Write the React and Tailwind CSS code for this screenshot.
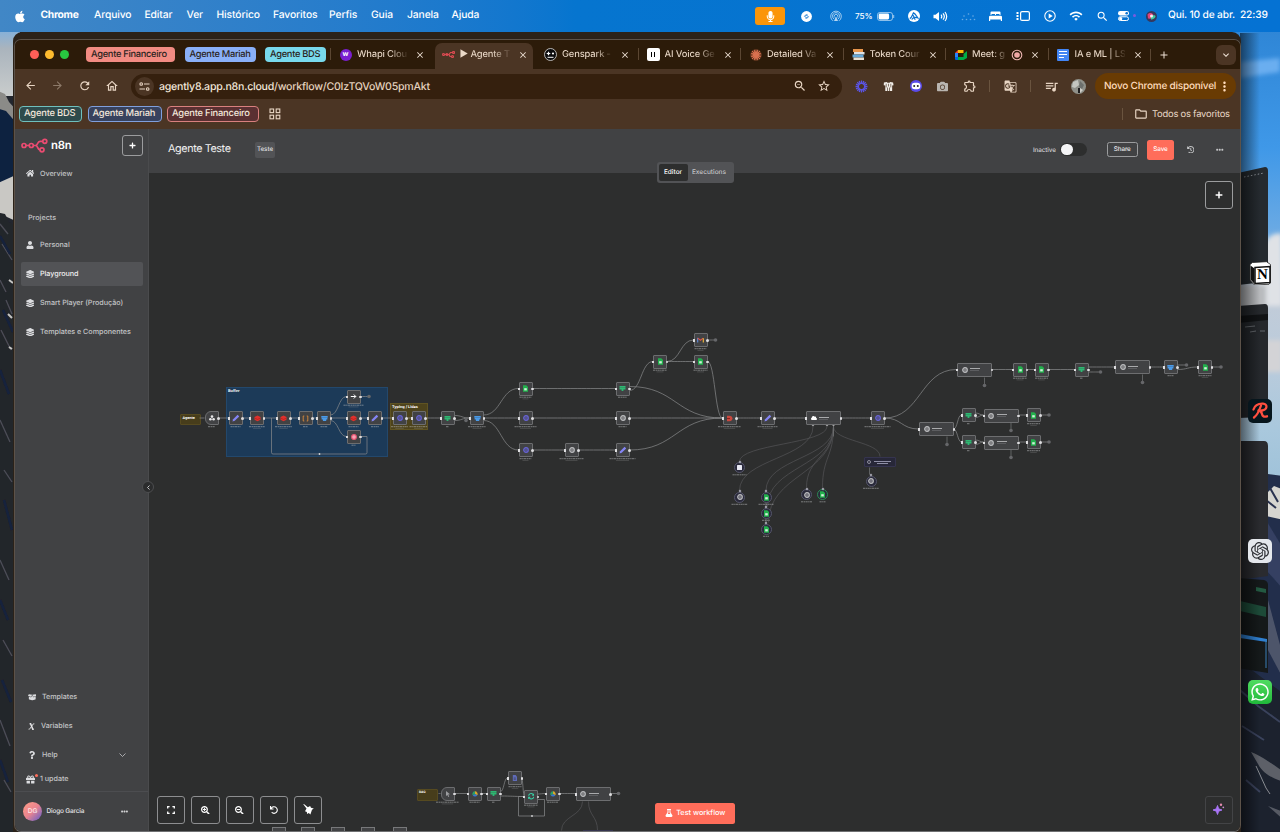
import React from "react";
import {
  FaApple, FaHome, FaUser, FaLayerGroup, FaBoxOpen, FaQuestion, FaGift, FaPlus, FaFlask,
  FaMicrophone, FaWhatsapp, FaCloud, FaEllipsisH, FaSearchPlus, FaSearchMinus, FaUndo, FaHistory, FaCamera, FaSyncAlt,
} from "react-icons/fa";
import {
  MdArrowBack, MdArrowForward, MdRefresh, MdOutlineHome, MdStarBorder, MdZoomOut, MdOutlineExtension,
  MdGTranslate, MdQueueMusic, MdOutlineFolder, MdClose, MdAdd, MdMoreVert, MdExpandMore, MdWifi, MdSearch,
} from "react-icons/md";
import { SiOpenai } from "react-icons/si";

/* ---------- desktop ---------- */

function Wallpaper() {
  return (
    <svg className="absolute inset-0 h-full w-full" viewBox="0 0 1280 832" aria-hidden="true">
      <defs>
        <linearGradient id="sky" x1="0" y1="0" x2="0" y2="1">
          <stop offset="0" stopColor="#2f86d6" />
          <stop offset="0.25" stopColor="#3f98e8" />
          <stop offset="0.42" stopColor="#68a9e4" />
          <stop offset="0.55" stopColor="#c3ccd8" />
          <stop offset="0.72" stopColor="#b9cbdc" />
          <stop offset="0.85" stopColor="#a9c8dd" />
          <stop offset="1" stopColor="#9cc0d8" />
        </linearGradient>
        <linearGradient id="leftsky" x1="0" y1="0" x2="0" y2="1">
          <stop offset="0" stopColor="#7fb0de" />
          <stop offset="0.3" stopColor="#aab4bd" />
          <stop offset="1" stopColor="#c9cccc" />
        </linearGradient>
        <linearGradient id="shade" x1="0" y1="0" x2="1" y2="0">
          <stop offset="0" stopColor="#000" stopOpacity="0.55" />
          <stop offset="1" stopColor="#000" stopOpacity="0" />
        </linearGradient>
        <filter id="soft"><feGaussianBlur stdDeviation="2" /></filter>
        <filter id="rough"><feGaussianBlur stdDeviation="0.7" /></filter>
      </defs>
      <rect width="1280" height="832" fill="#22262e" />
      <g filter="url(#rough)">
        <rect x="-4" y="28" width="24" height="68" fill="url(#leftsky)" />
        <path d="M-4 90l9 4 4 8 9 10v20H-4z" fill="#8b8b88" />
        <path d="M-4 108l10 3 12 14v64l-22-6z" fill="#0f2240" />
        <path d="M-4 184l22 -10v48l-22-10z" fill="#c9c8c4" />
        <path d="M-4 212l9 2 4 8 9 4v606H-4z" fill="#24252b" />
        <g stroke="#4c4e57" strokeWidth="1.300">
          <path d="M0 224l8 10M2 244l10 16M0 280l6 12M6 300l6 14M1 330l10 20M0 420l10 22M4 470l8 12M0 560l9 20M3 640l9 16M0 720l10 26M4 780l7 12" />
        </g>
        <g stroke="#12203c" strokeWidth="2.500">
          <path d="M0 236l10 18M3 310l10 22M0 370l9 24M4 500l8 30M0 600l8 20M2 680l9 22M0 760l8 22" />
        </g>
        <path d="M9 280l4 3M8 314l4 4M9 347l3 2" stroke="#c5c5c2" strokeWidth="2" />
      </g>

      <rect x="1220" y="30" width="60" height="470" fill="url(#sky)" />
      <g filter="url(#soft)">
        <path d="M1240 62l40 -4v14l-40 6z" fill="#6aaef0" />
        <path d="M1262 248c6-12 12-16 20-14v72h-22z" fill="#dfe2e6" />
        <path d="M1240 285h26v26h-26z" fill="#b8babd" />
        <path d="M1262 340h20v32h-20z" fill="#d3d3d6" />
      </g>
      <g filter="url(#rough)">
        <path d="M1238 480l30-6 16 2v360h-46z" fill="#232f4b" />
        <path d="M1266 494l8-8 10 4v30l-18-4z" fill="#d6d5d0" />
        <path d="M1266 500l10 8M1270 488l8 14" stroke="#2a3350" strokeWidth="2" />
        <path d="M1266 520l18 30v40l-18-20z" fill="#343f62" />
        <path d="M1268 600l16 60v20l-16-30z" fill="#6a6f80" opacity="0.6" />
        <path d="M1238 660l46 34v142h-46z" fill="#1b222e" />
        <path d="M1240 690l18 16 22 16M1242 726l22 14M1246 780l14 12" stroke="#3a435c" strokeWidth="2" fill="none" />
        <path d="M1251 752c6 2 16 8 33 20v10c-14-4-22-10-26-18z" fill="#5d6068" />
        <path d="M1256 766l10 22 4 6" stroke="#8a8c92" fill="none" />
        <path d="M1268 806l16 6v8z" fill="#565a64" />
      </g>

      {/* stage manager thumbnails */}
      <path d="M1238 173l27-6q3 0 3 4v106q0 5-3 5l-27 3z" fill="#252a2f" />
      <path d="M1244 177l20-4" stroke="#8b9096" strokeWidth="1" strokeDasharray="1.5 2" />
      <path d="M1238 306l27-2q3 0 3 4v104q0 5-3 5l-27 1z" fill="#25282c" />
      <path d="M1238 316l30-2v6l-30 3z" fill="#111315" />
      <path d="M1245 327l10-1M1250 332l6-1M1260 331l5 0" stroke="#63676c" />
      <path d="M1238 441h26q4 0 4 5v130l-30 4z" fill="#2a2b2f" />
      <path d="M1238 578l26 2q4 1 4 5v88l-30-5z" fill="#15191a" />
      <path d="M1240 601l26 6v10l-26-6z" fill="#1d4a38" />
      <path d="M1256 587l10 2v4l-10-2z" fill="#235a42" />
      <path d="M1240 634l27 5v3l-27-4z" fill="#2f7fd0" />
      <path d="M1266 640v28" stroke="#3b7fb8" />
      <rect x="1240" y="33" width="20" height="799" fill="url(#shade)" />
    </svg>
  );
}

function MenuSlot({ w, children }) {
  return <div className={"flex h-full items-center justify-center " + w}>{children}</div>;
}

function MenuBar() {
  const items = [
    ["Chrome", "w-[53.5px] font-bold tracking-[-0.3px]"],
    ["Arquivo", "w-[50.5px]"],
    ["Editar", "w-[42px]"],
    ["Ver", "w-[30px]"],
    ["Histórico", "w-[56.5px]"],
    ["Favoritos", "w-[56px]"],
    ["Perfis", "w-[42px]"],
    ["Guia", "w-[36px]"],
    ["Janela", "w-[44.5px]"],
    ["Ajuda", "w-[40px]"],
  ];
  return (
    <header className="relative flex h-8 items-center bg-linear-to-r from-[#4187c6] via-[#0675cf] via-45% to-[#0572d3] text-[10.3px] font-medium tracking-[-0.1px] text-white">
      <FaApple className="ml-[14px] h-[13px] w-[12px]" />
      <nav className="ml-[14.500px] flex">
        {items.map(([t, c]) => (
          <span key={t} className={"whitespace-nowrap " + c}>{t}</span>
        ))}
      </nav>
      <div className="ml-auto flex h-full items-center pr-[11px]">
        <div className="flex h-[18px] w-[30px] items-center justify-center rounded-[3px] bg-[#fb9509]">
          <FaMicrophone className="h-[11px] w-[11px]" />
        </div>
        <div className="w-[6px]" />
        <MenuSlot w="w-[30px]">
          <svg className="size-[11px]" viewBox="0 0 12 12"><circle cx="6" cy="6" r="5.900" fill="#fff" /><path d="M7 3.800L4.500 4.800a1 1 0 000 1.700l1.700.7M5 8.200l2.500-1a1 1 0 000-1.700l-1.700-.7" stroke="#0a72d0" strokeWidth=".9" fill="none" /></svg>
        </MenuSlot>
        <MenuSlot w="w-[30px]">
          <svg className="size-[12px] opacity-70" viewBox="0 0 12 12" fill="none" stroke="#fff" strokeWidth="0.9"><path d="M3 10.800a5.300 5.300 0 116 0M4 9a3.500 3.500 0 114 0M5 7.600a1.800 1.800 0 112 0" /><path d="M6 6.500l2 4.500H4z" fill="#fff" stroke="none" /></svg>
        </MenuSlot>
        <span className="ml-[4px] w-[22px] text-[8.200px] whitespace-nowrap">75%</span>
        <svg className="h-[9px] w-[18px]" viewBox="0 0 18 9"><rect x=".5" y=".5" width="15" height="8" rx="2.300" fill="none" stroke="#fff" opacity=".55" /><rect x="1.600" y="1.600" width="10.500" height="5.800" rx="1.300" fill="#fff" /><path d="M16.700 3v3" stroke="#fff" opacity=".6" /></svg>
        <div className="w-[6px]" />
        <MenuSlot w="w-[26px]">
          <svg className="size-[12px]" viewBox="0 0 12 12"><circle cx="6" cy="6" r="6" fill="#fff" /><path d="M1.800 8.600C4 7.500 4.300 5 5.500 2.800c1.800.5 3 3.500 4.300 5C8 7.300 5 7.500 3.700 9.500M5.200 5.200l2 4.500" stroke="#0a72d0" strokeWidth="1.200" fill="none" /></svg>
        </MenuSlot>
        <MenuSlot w="w-[26px]">
          <svg className="h-[11px] w-[15px]" viewBox="0 0 15 11" fill="none" stroke="#fff" strokeWidth="1.200"><path d="M.5 3.700h2L6 1v9L2.500 7.300h-2z" fill="#fff" stroke="none" /><path d="M8 3.600a3 3 0 010 3.800M10 2.300a5 5 0 010 6.400M12 1a7.500 7.500 0 010 9" /></svg>
        </MenuSlot>
        <MenuSlot w="w-[30px]">
          <svg className="h-[9px] w-[15px] opacity-40" viewBox="0 0 15 9" fill="#fff"><circle cx="3" cy="4" r=".8" /><circle cx="7.500" cy="2" r=".8" /><circle cx="12" cy="4" r=".8" /><circle cx="1.500" cy="7.500" r=".8" /><circle cx="5.500" cy="7.500" r=".8" /><circle cx="9.500" cy="7.500" r=".8" /><circle cx="13.500" cy="7.500" r=".8" /></svg>
        </MenuSlot>
        <MenuSlot w="w-[24px]">
          <svg className="h-[10px] w-[13px]" viewBox="0 0 13 10" fill="#fff"><path d="M1.500 1.500a1 1 0 011-1h8a1 1 0 011 1V4h-1V3H7v1H6V3H2.500v1h-1zM0 6a1.300 1.300 0 011.300-1.300h10.400A1.300 1.300 0 0113 6v4h-1.200V8.500H1.200V10H0z" /></svg>
        </MenuSlot>
        <MenuSlot w="w-[32px]">
          <svg className="h-[10px] w-[14px]" viewBox="0 0 14 10"><rect x="4.600" y=".6" width="8.800" height="8.800" rx="1.500" fill="none" stroke="#fff" strokeWidth="1.200" /><path d="M.5 1h2v2h-2zM.5 4h2v2h-2zM.5 7h2v2h-2z" fill="#fff" /></svg>
        </MenuSlot>
        <MenuSlot w="w-[21px]">
          <svg className="size-[12px]" viewBox="0 0 12 12"><circle cx="6" cy="6" r="5.200" fill="none" stroke="#fff" strokeWidth="1.100" /><path d="M4.700 3.600v4.800L8.700 6z" fill="#fff" /></svg>
        </MenuSlot>
        <MenuSlot w="w-[32px]"><MdWifi className="size-[14px]" /></MenuSlot>
        <MenuSlot w="w-[20px]"><MdSearch className="size-[13px]" /></MenuSlot>
        <MenuSlot w="w-[23px]">
          <svg className="h-[10px] w-[11px]" viewBox="0 0 11 10"><rect x="0" y="0" width="11" height="4.400" rx="2.200" fill="#fff" /><circle cx="8.700" cy="2.200" r="1.300" fill="#0a72d0" /><rect x=".5" y="5.800" width="10" height="3.700" rx="1.800" fill="none" stroke="#fff" /><circle cx="2.700" cy="7.650" r="1.600" fill="#fff" /></svg>
        </MenuSlot>
        <MenuSlot w="w-[32px]">
          <svg className="size-[11px]" viewBox="0 0 11 11"><circle cx="5.500" cy="5.500" r="5.500" fill="#35385e" /><path d="M1.500 3.500C4 1 7 2 7.500 4.500S5 8 2 7.500z" fill="#e0457a" /><path d="M5 6c2-2.500 4.500-2 4.500-.5S7 8.500 5 8.500z" fill="#3fc9a0" /><circle cx="5.500" cy="5" r="1.500" fill="#fff" opacity=".85" /></svg>
        </MenuSlot>
        <span className="ml-px w-[101px] whitespace-pre text-[10.200px] tracking-[-0.15px]">Qui. 10 de abr.  22:39</span>
      </div>
      <span className="absolute left-[1133px] top-[14px] size-[3px] rounded-full bg-[#7a5be0]" />
    </header>
  );
}

function DockIcon({ cls, children }) {
  return <div className={"absolute left-[1248px] flex size-[24px] items-center justify-center " + cls}>{children}</div>;
}

/* ---------- browser ---------- */

function N8nMark({ className }) {
  return (
    <svg className={className} viewBox="0 0 27 15" fill="none" stroke="#ea4b71" strokeWidth="1.700">
      <circle cx="3" cy="7.500" r="2" /><circle cx="10.300" cy="7.500" r="2" /><circle cx="23.800" cy="3.300" r="2" /><circle cx="21" cy="11.800" r="2" />
      <path d="M5 7.500h3.300M12.300 7.500h2.200c2.700 0 1.500-4.200 4.500-4.200h2.800M14.500 7.500c3 0 1.500 4.300 4.500 4.300" />
    </svg>
  );
}

const tabIcons = {
  whapi: <div className="flex size-[12px] items-center justify-center rounded-full bg-[#7a1fd0] text-[7px] font-bold text-white">w</div>,
  n8n: (
    <svg className="h-[7px] w-[13px]" viewBox="0 0 13 7" fill="none" stroke="#d94a50" strokeWidth="1.200"><circle cx="1.600" cy="3.500" r="1" /><circle cx="5" cy="3.500" r="1" /><circle cx="11.500" cy="1.500" r="1" /><circle cx="10.500" cy="5.500" r="1" /><path d="M2 3.500h5l1.500-2h2M7 3.500l1 2h1.500" /></svg>
  ),
  genspark: (
    <svg className="size-[13px]" viewBox="0 0 13 13"><circle cx="6.500" cy="6.500" r="6" fill="#0c0c0e" stroke="#dcdcdc" strokeWidth=".8" /><path d="M4.500 3.200l.7 1.600 1.600.7-1.600.7-.7 1.600-.7-1.600-1.600-.7 1.600-.7z" fill="#fff" /><circle cx="9" cy="5.500" r="1.100" fill="#fff" /><path d="M3.500 9.300h6" stroke="#fff" /></svg>
  ),
  eleven: <div className="flex size-[13px] items-center justify-center gap-[1.500px] rounded-[2px] bg-white"><i className="h-[5.500px] w-[1.500px] bg-black" /><i className="h-[5.500px] w-[1.500px] bg-black" /></div>,
  claude: (
    <svg className="size-[12px]" viewBox="0 0 12 12" stroke="#d9704f" strokeWidth="1.100"><path d="M6 .5v11M.5 6h11M2 2l8 8M10 2l-8 8M4 .8l4 10.400M8 .8L4 11.200M.8 4l10.400 4M.8 8l10.400-4" /></svg>
  ),
  token: (
    <svg className="size-[13px]" viewBox="0 0 13 13"><rect x="1" y="1" width="10" height="3" fill="#e9964c" /><rect x="2" y="4" width="10.500" height="2.500" fill="#dfe3e6" /><rect x=".5" y="6.500" width="11" height="3" fill="#65a8d8" /><rect x="1.500" y="9.500" width="10.500" height="2.500" fill="#e8e0d2" /></svg>
  ),
  meet: (
    <svg className="h-[10px] w-[12px]" viewBox="0 0 12 10"><path d="M0 3l3-3v3z" fill="#ea4335" /><path d="M3 0h5.500v3H3z" fill="#fbbc04" /><path d="M0 3h3v4H0z" fill="#2684fc" /><path d="M0 7h3v3H1a1 1 0 01-1-1z" fill="#0066da" /><path d="M3 7h5.500v3H3zM8.500 0v10L12 8V1L8.500 4z" fill="#00ac47" /></svg>
  ),
  docs: <div className="flex size-[12px] flex-col justify-center gap-[1.500px] rounded-[1px] bg-[#4285f4] px-[2px]"><i className="h-[1.200px] bg-white" /><i className="h-[1.200px] bg-white" /><i className="h-[1.200px] w-[5px] bg-white" /></div>,
};

function Tab({ icon, title, active, rec, line }) {
  return (
    <div className="relative h-full w-[102.500px] shrink-0 px-[2.500px] pt-[3px]">
      {line && <span className="absolute left-0 top-[8px] h-[12px] w-px bg-[#5b4632]" />}
      <div className={"flex h-[26px] items-center rounded-t-[7px] pb-[3px] pl-[6px] " + (active ? "bg-[#4b3524]" : "")}>
        <div className="flex w-[14px] shrink-0 justify-center">{icon}</div>
        <span className={"ml-[4.500px] mt-px whitespace-nowrap bg-linear-to-r from-[#ead9c8] from-65% to-[#ead9c8]/10 bg-clip-text text-[9.400px] font-medium tracking-[-0.15px] text-transparent " + (rec ? "w-[34px]" : "w-[50px]")}>{title}</span>
        {rec && (
          <svg className="ml-[5px] size-[12px]" viewBox="0 0 12 12"><circle cx="6" cy="6" r="4.800" fill="none" stroke="#f2b8b5" strokeWidth="1.100" /><circle cx="6" cy="6" r="2.800" fill="#f0a8a5" /></svg>
        )}
        <MdClose className={"size-[10px] shrink-0 text-[#efe2d6] " + (rec ? "ml-[7px]" : "ml-[8px]")} />
      </div>
    </div>
  );
}

function TabStrip() {
  return (
    <div className="flex h-[29px] items-center bg-[#2c1b09]">
      <div className="ml-[15px] flex gap-[6px]">
        <i className="size-[9px] rounded-full bg-[#ff5f57]" />
        <i className="size-[9px] rounded-full bg-[#febb2e]" />
        <i className="size-[9px] rounded-full bg-[#28c840]" />
      </div>
      <div className="ml-[17px] flex gap-[9.500px] text-[9.300px] font-medium tracking-[-0.3px] text-[#2a2320]">
        <span className="flex h-[15.500px] w-[89px] items-center whitespace-nowrap rounded-[4px] bg-[#f28b82] pl-[5px] pt-px">Agente Financeiro</span>
        <span className="flex h-[15.500px] w-[71px] items-center whitespace-nowrap rounded-[4px] bg-[#8ab0f8] pl-[5px] pt-px">Agente Mariah</span>
        <span className="flex h-[15.500px] w-[60.500px] items-center whitespace-nowrap rounded-[4px] bg-[#78d9ec] pl-[5px] pt-px">Agente BDS</span>
      </div>
      <div className="ml-[4.500px] flex h-full">
        <Tab line icon={tabIcons.whapi} title="Whapi Clou" />
        <Tab active icon={tabIcons.n8n} title="► Agente T" />
        <Tab icon={tabIcons.genspark} title="Genspark -" />
        <Tab line icon={tabIcons.eleven} title="AI Voice Ge" />
        <Tab line icon={tabIcons.claude} title="Detailed Va" />
        <Tab line icon={tabIcons.token} title="Token Cour" />
        <Tab line rec icon={tabIcons.meet} title="Meet: g" />
        <Tab line icon={tabIcons.docs} title="IA e ML | LS" />
      </div>
      <span className="h-[12px] w-px bg-[#5b4632]" />
      <MdAdd className="ml-[7px] size-[12px] text-[#efe2d6]" />
      <div className="ml-auto mr-[4px] flex size-[20px] items-center justify-center rounded-[6px] bg-[#4b3524]">
        <MdExpandMore className="size-[12px] text-[#efe2d6]" />
      </div>
    </div>
  );
}

function ToolSlot({ w, children }) {
  return <div className={"flex shrink-0 justify-center " + w}>{children}</div>;
}

function Toolbar() {
  return (
    <div className="flex h-[34px] items-center bg-[#4b3524] text-[#e8d5c3]">
      <div className="ml-[1.500px] flex">
        <ToolSlot w="w-[28px]"><MdArrowBack className="size-[13px]" /></ToolSlot>
        <ToolSlot w="w-[26px]"><MdArrowForward className="size-[13px] text-[#8d7a69]" /></ToolSlot>
        <ToolSlot w="w-[28px]"><MdRefresh className="size-[13.500px]" /></ToolSlot>
        <ToolSlot w="w-[26px]"><MdOutlineHome className="size-[14px]" /></ToolSlot>
      </div>
      <div className="ml-[6.500px] flex h-[25px] w-[711px] items-center rounded-full bg-[#35200e]">
        <div className="ml-[4px] flex size-[19px] items-center justify-center rounded-full bg-[#4b3524]">
          <svg className="h-[9px] w-[11px]" viewBox="0 0 11 9" fill="none" stroke="#e8d5c3" strokeWidth="1.100"><circle cx="2.200" cy="2" r="1.300" /><path d="M5 2h5.500M.5 7H6" /><circle cx="8.700" cy="7" r="1.300" /></svg>
        </div>
        <span className="ml-[5px] mt-px text-[10.600px] font-medium tracking-[-0.24px] text-[#f2e6da]">agently8.app.n8n.cloud<span className="text-[#e3d0bd]">/workflow/C0IzTQVoW05pmAkt</span></span>
        <MdZoomOut className="ml-auto size-[14px]" />
        <MdStarBorder className="ml-[10px] mr-[11px] size-[14px]" />
      </div>
      <div className="ml-[6px] flex items-center">
        <ToolSlot w="w-[27px]">
          <svg className="size-[13px]" viewBox="-6.500 -6.500 13 13" stroke="#5b54e6" strokeWidth="1.300" fill="none"><path d="M0-6v3.500M0 6V2.500M-6 0h3.500M6 0H2.500M-4.200-4.200l2.500 2.500M4.200 4.200L1.700 1.700M4.200-4.200L1.700-1.700M-4.200 4.200l2.500-2.500M-2.300-5.500L-1-2.300M2.300-5.500L1-2.300M-2.300 5.500L-1 2.300M2.300 5.500L1 2.300M-5.500-2.300L-2.300-1M5.500-2.300L2.300-1M-5.500 2.300L-2.300 1M5.500 2.300L2.300 1" /></svg>
        </ToolSlot>
        <ToolSlot w="w-[27px]">
          <svg className="size-[11px]" viewBox="0 0 12 12" fill="#f1ede8"><path d="M1 1.500l3-.5 1 1h2l1-1 3 .5.500 3-1.500.5V11H7.500V7h-.7v4H5.200V7h-.7v4H2.500V5L.8 4.500z" /><path d="M3.500 3v4M8.500 3v4M6 3v3" stroke="#4b3524" strokeWidth=".7" /></svg>
        </ToolSlot>
        <ToolSlot w="w-[27px]">
          <svg className="size-[12px]" viewBox="0 0 12 12"><circle cx="6" cy="6" r="6" fill="#5a4be8" /><rect x="1.600" y="2.800" width="8.800" height="6.400" rx="3.200" fill="#fff" /><circle cx="4.200" cy="6" r="1" fill="#222" /><circle cx="7.800" cy="6" r="1" fill="#222" /></svg>
        </ToolSlot>
        <ToolSlot w="w-[27px]"><FaCamera className="size-[11px] text-[#b9b5b0]" /></ToolSlot>
        <ToolSlot w="w-[27px]"><MdOutlineExtension className="size-[14px]" /></ToolSlot>
      </div>
      <span className="ml-[6px] h-[12px] w-px bg-[#6a543f]" />
      <ToolSlot w="w-[40px]"><MdGTranslate className="size-[13px]" /></ToolSlot>
      <span className="h-[12px] w-px bg-[#6a543f]" />
      <ToolSlot w="w-[40px]"><MdQueueMusic className="size-[15px]" /></ToolSlot>
      <svg className="size-[15px]" viewBox="0 0 15 15"><circle cx="7.500" cy="7.500" r="7.500" fill="#8f9089" /><path d="M2 3l5-2 1 5-4 3-3-1z" fill="#c4c6c0" /><path d="M9 2l4 4-2 4-3-2z" fill="#6c6f6c" /><path d="M7 9h2v5H7z" fill="#1f1f20" /><path d="M9 9l3 2-3 3z" fill="#d0cfc9" /></svg>
      <div className="ml-auto mr-[4px] flex h-[26px] w-[141px] items-center rounded-full bg-[#693b03] text-[10px] font-medium tracking-[-0.22px] text-[#ffdcbc]">
        <span className="ml-[9px] mt-px whitespace-nowrap">Novo Chrome disponível</span>
        <MdMoreVert className="ml-auto mr-[4px] size-[15px] shrink-0" />
      </div>
    </div>
  );
}

function Bookmarks() {
  return (
    <div className="flex h-[26px] items-start bg-[#4b3524] pt-[3px] text-[9.400px] font-medium tracking-[-0.22px] text-[#f2e6da]">
      <span className="ml-[4px] flex h-[15.500px] w-[63px] items-center whitespace-nowrap rounded-[4px] border border-[#6fc0bd] bg-[#2f4b4c] pl-[4px] pt-px">Agente BDS</span>
      <span className="ml-[5.500px] flex h-[15.500px] w-[74px] items-center whitespace-nowrap rounded-[4px] border border-[#7f9fdd] bg-[#38425e] pl-[4px] pt-px">Agente Mariah</span>
      <span className="ml-[5.500px] flex h-[15.500px] w-[92px] items-center whitespace-nowrap rounded-[4px] border border-[#d9807e] bg-[#5a3032] pl-[4px] pt-px">Agente Financeiro</span>
      <svg className="ml-[10px] mt-[2px] size-[12px]" viewBox="0 0 12 12" fill="none" stroke="#e8d5c3" strokeWidth="1.100"><rect x="1" y="1" width="3.600" height="3.600" /><rect x="7.200" y="1" width="3.600" height="3.600" /><rect x="1" y="7.200" width="3.600" height="3.600" /><rect x="7.200" y="7.200" width="3.600" height="3.600" /></svg>
      <span className="ml-auto mt-[2px] h-[12px] w-px bg-[#6a543f]" />
      <MdOutlineFolder className="ml-[11px] mt-px size-[14px] text-[#e8d5c3]" />
      <span className="ml-[4px] mt-[1.500px] w-[88px] whitespace-nowrap text-[9.400px] font-normal tracking-[-0.22px] text-[#ead9c8]">Todos os favoritos</span>
    </div>
  );
}

/* ---------- n8n ---------- */

function NavRow({ icon, label, active, indent = "ml-[5px]" }) {
  return (
    <div className={"mx-[5.500px] flex h-[24px] items-center rounded-[2px] " + (active ? "bg-[#525356] text-[#f0f0f0]" : "text-[#c3c4c6]")}>
      <span className="ml-[4.500px] flex w-[10px] justify-center text-[#dcdde0]">{icon}</span>
      <span className={"mt-px whitespace-nowrap text-[7.200px] font-medium tracking-[-0.04px] " + indent}>{label}</span>
    </div>
  );
}

function Sidebar() {
  return (
    <aside className="relative flex w-[134px] shrink-0 flex-col border-r border-[#4a4b4d] bg-[#414244]">
      <div className="flex h-[21px] items-center pl-[6px] pr-[5px] mt-[6px]">
        <N8nMark className="h-[15px] w-[27px]" />
        <span className="ml-[3px] mt-px text-[11.300px] font-semibold leading-none tracking-[-0.2px] text-white">n8n</span>
        <div className="ml-auto flex size-[21px] items-center justify-center rounded-[3px] border border-[#9b9c9e]"><FaPlus className="size-[7px] text-white" /></div>
      </div>
      <div className="mt-[5.500px]"><NavRow icon={<FaHome className="size-[8.500px]" />} label="Overview" /></div>
      <div className="mt-[26px] pl-[13px] text-[7.200px] font-medium leading-[12px] text-[#c3c4c6]">Projects</div>
      <div className="mt-[9.500px] flex flex-col gap-[5px]">
        <NavRow icon={<FaUser className="size-[8px]" />} label="Personal" />
        <NavRow active icon={<FaLayerGroup className="size-[8.500px]" />} label="Playground" />
        <NavRow icon={<FaLayerGroup className="size-[8.500px]" />} label="Smart Player (Produção)" />
        <NavRow icon={<FaLayerGroup className="size-[8.500px]" />} label="Templates e Componentes" />
      </div>
      <div className="mt-auto flex flex-col gap-[5px]">
        <div className="pl-[2px]"><NavRow icon={<FaBoxOpen className="size-[8.500px]" />} label="Templates" /></div>
        <div className="pl-[1.500px]">
          <NavRow
            icon={<svg className="h-[7px] w-[7px]" viewBox="0 0 7 7" fill="none" stroke="#e6e6e8"><path d="M1.600.8h1l2.200 5.400h1" strokeWidth="1.500" /><path d="M6.300.8h-.9L1.500 6.200H.6" strokeWidth=".9" /></svg>}
            label="Variables"
            indent="ml-[4.500px]"
          />
        </div>
        <div className="flex items-center pl-[2px]">
          <NavRow icon={<FaQuestion className="size-[8px]" />} label="Help" />
          <svg className="ml-auto mr-[22px] h-[4px] w-[7px]" viewBox="0 0 7 4" fill="none" stroke="#c3c4c6" strokeWidth=".8"><path d="M.5.5l3 3 3-3" /></svg>
        </div>
      </div>
      <div className="relative">
        <NavRow icon={<FaGift className="size-[9px]" />} label="1 update" />
        <span className="absolute left-[19.500px] top-[7px] size-[3px] rounded-full bg-[#ff6d5a]" />
      </div>
      <div className="flex h-[40px] items-center border-t border-[#4c4d50]">
        <div className="ml-[8px] flex size-[19px] items-center justify-center rounded-full bg-linear-to-br from-[#ff9d85] via-[#e9838f] to-[#5d50c6] text-[6.500px] font-medium text-white/80">DG</div>
        <span className="ml-[4.500px] mt-px text-[6.500px] font-medium tracking-[-0.18px] text-[#e3e3e4]">Diogo Garcia</span>
        <FaEllipsisH className="ml-auto mr-[20.500px] size-[7px] text-[#d0d0d2]" />
      </div>
      <div className="absolute left-[127px] top-[352px] z-10 flex size-[12px] items-center justify-center rounded-full border border-[#4d4e50] bg-[#2b2c2d]">
        <svg className="h-[5px] w-[3px]" viewBox="0 0 3 5" fill="none" stroke="#d5d5d7" strokeWidth=".9"><path d="M2.500.5l-2 2 2 2" /></svg>
      </div>
    </aside>
  );
}

function TopHeader() {
  return (
    <div className="relative flex h-[44px] shrink-0 items-center bg-[#414244]">
      <span className="ml-[19px] mb-[3px] w-[87px] whitespace-nowrap text-[10.800px] tracking-[-0.4px] text-[#f0f0f0]">Agente Teste</span>
      <span className="mb-[3px] flex h-[16px] w-[20px] items-center justify-center rounded-[2px] bg-[#525356] text-[6.200px] font-medium text-[#dddddf]">Teste</span>
      <div className="mb-[3px] ml-auto flex items-center">
        <span className="mt-[2px] w-[27px] text-[6.300px] font-medium tracking-[-0.1px] text-[#cfd0d2]">Inactive</span>
        <div className="flex h-[13px] w-[27px] items-center rounded-full bg-[#2d2e2e]"><i className="ml-[1px] size-[11.500px] rounded-full bg-[#f4f4f6]" /></div>
        <div className="ml-[20px] flex h-[15.500px] w-[30.500px] items-center justify-center rounded-[2.500px] border border-[#9b9c9e] text-[6.300px] font-medium tracking-[-0.1px] text-[#e8e8ea]">Share</div>
        <div className="ml-[9.500px] flex h-[20px] w-[27px] items-center justify-center rounded-[2.500px] bg-[#ff6d5a] text-[6.300px] font-medium tracking-[-0.1px] text-white">Save</div>
        <FaHistory className="ml-[12.500px] size-[7.500px] text-[#c3c4c6]" />
        <FaEllipsisH className="ml-[22px] mr-[16.500px] size-[7.500px] text-[#c3c4c6]" />
      </div>
      <div className="absolute left-[507.500px] top-[33px] z-10 flex h-[21px] w-[77px] items-center rounded-[3px] bg-[#525356] p-[2px] text-[6.500px] font-medium text-[#c3c4c6]">
        <span className="flex h-full w-[29px] items-center justify-center rounded-[2px] bg-[#2d2e2e] pt-px text-white">Editor</span>
        <span className="flex flex-1 justify-center pr-px pt-px">Executions</span>
      </div>
    </div>
  );
}

/* Diagram geometry. The board's own origin is (149.5, 173.5). */
const OX = 149.5;
const OY = 173.5;

const nodes = [
  [212, 418.5, "trigger", 7], [236, 418.5, "pen", 10], [257.5, 418.5, "redis", 16], [284, 418.5, "redis", 17],
  [306, 418.5, "code", 5], [324.5, 418.5, "switch", 7], [354, 397, "arrow", 20], [354, 418.5, "redis", 10],
  [354, 437, "stop", 4], [375.5, 418.5, "pen", 8], [400, 418.5, "http", 17], [419, 418.5, "http", 18],
  [448, 418.5, "if", 3], [477.5, 418.5, "switch", 18],
  [526, 389, "sheet", 12], [526, 418.5, "http", 22], [526, 450.5, "http", 12],
  [623, 389, "if", 9], [623, 418.5, "ai", 8], [623, 450.5, "pen", 26], [572, 450.5, "ai", 24],
  [660.5, 362, "sheet", 14], [701, 340.5, "gmail", 12], [701, 362, "sheet", 14],
  [730, 418.5, "merge", 23], [768, 418.5, "pen", 20], [878, 418.5, "http", 26],
  [1020.5, 370, "sheet", 14], [1042, 370, "sheet", 13], [1082, 370, "if", 3], [1171, 367.5, "switch", 6], [1205.5, 367.5, "sheet", 13],
  [969, 415.5, "if", 3], [1034, 415.5, "sheet", 13], [969, 442.5, "if", 3], [1034, 442.5, "sheet", 13],
  [448, 794, "cursor", 23], [475, 794, "drive", 10], [494, 794, "if", 3], [515.5, 778.5, "doc", 13], [531.5, 797, "loop", 14], [553, 794, "drive", 11],
];

const wides = [
  [806.5, 411.5, "cloud"], [957.5, 363, "ai"], [1115.5, 360.5, "ai"], [919.5, 422.5, "ai"],
  [984, 409, "ai"], [984, 436, "ai"], [576, 787.5, "ai"],
];

const tools = [
  [740, 468, "box", 14], [740, 497.5, "ai", 16], [766.5, 497.5, "sheet", 15], [766.5, 513.5, "sheet", 8],
  [766.5, 529.5, "sheet", 6], [807, 495, "ai", 11], [823, 495, "sheetring", 6], [871.5, 481.5, "ai", 16],
];

const edges = [
  [200, 418.5, 205, 418.5], [219, 418.5, 400, 418.5], [407, 418.5, 441, 418.5], [455, 416, 470, 418.5], [455, 421, 470, 418.5],
  [331, 415.5, 347, 397], [331, 421, 347, 437], [361, 397, 368, 397],
  [484, 415.5, 519, 389], [484, 418.5, 519, 418.5], [484, 421, 519, 450.5],
  [533, 389, 616, 389], [533, 418.5, 616, 418.5], [533, 450.5, 565, 450.5], [579, 450.5, 616, 450.5],
  [630, 391, 653.5, 362], [630, 387, 723, 418.5], [630, 418.5, 723, 418.5], [630, 450.5, 723, 418.5],
  [667.5, 362, 694, 340.5], [667.5, 362, 694, 362], [708, 340.5, 715, 340.5], [708, 362, 723, 418.5],
  [737, 418.5, 761, 418.5], [775, 418.5, 806, 418.5], [841, 418.5, 871, 418.5],
  [885, 418.5, 957, 370], [885, 418.5, 919, 429.5],
  [992, 370, 1075, 370], [1089, 367.5, 1115, 367.5], [1089, 372.5, 1101, 372.5], [1150, 367.5, 1164, 367.5],
  [1178, 365.5, 1187, 365.5], [1178, 370, 1198, 367.5], [1212, 367.5, 1221, 367.5],
  [954, 429.5, 962, 415.5], [954, 429.5, 962, 442.5],
  [976, 413.5, 984, 415.5], [976, 418, 984, 415.5], [976, 440.5, 984, 442.5], [976, 445, 984, 442.5],
  [1018, 415.5, 1027, 415.5], [1018, 442.5, 1027, 442.5], [1041, 415.5, 1049, 415.5], [1041, 442.5, 1049, 442.5],
  [439, 794, 441, 794], [455, 794, 487, 794], [501, 792, 508, 778.5], [522, 778.5, 525, 797], [501, 796.5, 525, 797],
  [538, 794.5, 546, 794], [560, 794, 576, 794], [610, 794, 619, 794],
];

const drops = [
  [827.5, 427, 740, 462], [813.5, 427, 740, 491], [834, 427, 766.5, 491], [834, 427, 768, 507], [834, 427, 769, 523],
  [834, 427, 807, 488], [834, 427, 823, 488], [834, 427, 880.5, 457], [583, 802, 562, 831], [589, 802, 598, 831],
];

const stubs = [[985, 378, 386], [1143, 375, 383], [947.5, 437, 445], [1011.5, 423, 431], [1011.5, 450, 458]];
const ends = [[369.5, 397], [716, 340.5], [1101, 372.5], [1187, 365.5], [1221.5, 367.5], [1049.5, 415.5], [1049.5, 442.5], [619, 794], [985, 386], [1143, 383], [947.5, 445], [1011.5, 431], [1011.5, 458], [466.5, 421]];

function Glyph({ kind }) {
  const ring = (c) => (
    <svg className="size-[6px]" viewBox="0 0 6 6"><circle cx="3" cy="3" r="2.300" fill="none" stroke={c} strokeWidth="1.200" /><path d="M.8 3h4.400M3 .8v4.400" stroke={c} strokeWidth=".6" /></svg>
  );
  switch (kind) {
    case "pen": return <svg className="size-[8px]" viewBox="0 0 7 7"><path d="M.4 6.600L1 4.600 4.900.7l1.400 1.400L2.400 6z" fill="#8585f5" /></svg>;
    case "redis": return <svg className="size-[7px]" viewBox="0 0 7 7"><path d="M3.500.6l3 1.500v2.600l-3 1.500-3-1.500V2.100z" fill="#e0302c" /><path d="M1 3.300l2.500 1.100L6 3.300" stroke="#9e1a16" strokeWidth=".5" fill="none" /></svg>;
    case "sheet": case "sheetring": return <svg className="h-[7px] w-[5px]" viewBox="0 0 5 7"><path d="M0 .3h3.300L5 2v4.700H0z" fill="#22b04c" /><path d="M1.200 3.200h2.600v2.200H1.200z" fill="#fff" opacity=".8" /></svg>;
    case "if": return <svg className="size-[7px]" viewBox="0 0 7 7"><path d="M.5.9h6v1.800h-6zM.5 3.100h6v1.300h-6zM2.600 4.400h1.800v1.500H2.600z" fill="#2db872" /></svg>;
    case "switch": return <svg className="size-[7px]" viewBox="0 0 7 7"><path d="M.3.900h6.400v1.800H.3zM.6 3h5.800v1.400H.6zM1.900 4.600h3.300v1.300H1.900z" fill="#4a9ae8" /></svg>;
    case "http": return ring("#6864d8");
    case "ai": return ring("#bdbec0");
    case "stop": return <svg className="size-[6px]" viewBox="0 0 6 6"><circle cx="3" cy="3" r="2.900" fill="#ef5b78" /><circle cx="3" cy="3" r="1.200" fill="none" stroke="#fff" strokeWidth=".6" /></svg>;
    case "code": return <svg className="size-[7px]" viewBox="0 0 7 7" fill="none" stroke="#d88a3c" strokeWidth=".9"><path d="M2.300 1H1.200v5h1.100M4.700 1h1.100v5H4.700" /></svg>;
    case "arrow": return <svg className="size-[7px]" viewBox="0 0 7 7" fill="none" stroke="#fff"><path d="M.8 3.500h5M3.800 1.500l2 2-2 2" /></svg>;
    case "trigger": return <svg className="size-[6px]" viewBox="0 0 6 6" fill="#e8e8ea"><circle cx="3" cy="1.600" r="1.300" /><circle cx="1.400" cy="4.300" r="1.300" /><circle cx="4.600" cy="4.300" r="1.300" /></svg>;
    case "gmail": return <svg className="h-[6px] w-[7px]" viewBox="0 0 7 5"><path d="M0 .3h1.300V5H0z" fill="#5b7fc4" /><path d="M.7.600L3.500 2.800 6.200.6" stroke="#d9544c" fill="none" strokeWidth="1.100" /><path d="M5.700.8H7V5H5.700z" fill="#d9a73a" /></svg>;
    case "merge": return <svg className="size-[7px]" viewBox="0 0 7 7"><path d="M1 .8h2.500c1.600 0 3 1.200 3 2.700S5 6.200 3.500 6.200H1z" fill="#c9483e" /><path d="M1 3.500h3" stroke="#7a1a15" strokeWidth=".8" /></svg>;
    case "cursor": return <svg className="size-[6px]" viewBox="0 0 6 6" fill="#9c9da0"><path d="M1 0l4 3.300-1.800.3 1 2-.9.400-.9-2L1 5z" /></svg>;
    case "drive": return <svg className="size-[6px]" viewBox="0 0 6 6"><path d="M3 .3a2.700 2.700 0 012.300 4L3 3z" fill="#d9a72c" /><path d="M5.300 4.300a2.700 2.700 0 01-4.600 0L3 3z" fill="#3b78d0" /><path d="M.7 4.300A2.700 2.700 0 013 .3V3z" fill="#2ba06a" /></svg>;
    case "doc": return <svg className="size-[6px]" viewBox="0 0 6 6"><path d="M.8 0h2.800L5 1.500V6H.8z" fill="#5f6bb8" /><path d="M1.800 3h2M1.800 4.300h2" stroke="#2d2e2e" strokeWidth=".5" /></svg>;
    case "loop": return <FaSyncAlt className="size-[6.500px] text-[#37d2a6]" />;
    case "cloud": return <FaCloud className="size-[6px] text-white" />;
    case "box": return <div className="size-[4.500px] rounded-[0.500px] bg-[#e8e9f4]" />;
    default: return null;
  }
}

function Canvas() {
  const at = (x, y) => ({ left: x - OX, top: y - OY });
  return (
    <div className="relative flex-1 overflow-hidden bg-[#2d2e2e]">
      {/* sticky notes */}
      <div className="absolute rounded-[1px] border border-[#564a20] bg-[#473d1b] px-[1.500px] text-[3.500px] font-bold leading-[7px] text-white" style={{ ...at(180.5, 414.5), width: 21, height: 11 }}>Agente</div>
      <div className="absolute border border-[#23486c] bg-[#1c3a58] px-[1px] text-[3.800px] font-bold leading-[5px] text-white" style={{ ...at(226.5, 387.5), width: 161.5, height: 70 }}>Buffer</div>
      <div className="absolute border border-[#5f5322] bg-[#4d431c] px-[1px] text-[3.800px] font-bold leading-[5px] text-white" style={{ ...at(390.5, 403.5), width: 38, height: 27 }}>Typing / Lidas</div>
      <div className="absolute rounded-[1px] border border-[#564a20] bg-[#473d1b] px-[1.500px] text-[3.200px] font-bold leading-[5px] text-white" style={{ ...at(417, 789.5), width: 21, height: 11.5 }}>RAG</div>

      <svg className="absolute left-0 top-0 h-[658px] w-[1091px]" viewBox="149.500 173.500 1091 658" fill="none">
        <g stroke="#8a8b8d" strokeWidth=".7">
          {edges.map(([x1, y1, x2, y2], i) => {
            const m = (x1 + x2) / 2;
            return <path key={i} d={`M${x1} ${y1}C${m} ${y1} ${m} ${y2} ${x2} ${y2}`} />;
          })}
          <path d="M272 418.500V453q0 1.500 1.500 1.500H366q1.500 0 1.500-1.500V437h-6M538 800h7v16.500h-26V797h6" />
        </g>
        <g stroke="#545558" strokeWidth=".7">
          {drops.map(([x1, y1, x2, y2], i) => {
            const m = (y1 + y2) / 2;
            return <path key={i} d={`M${x1} ${y1}C${x1} ${m} ${x2} ${m} ${x2} ${y2}`} />;
          })}
        </g>
        <g stroke="#77787a" strokeWidth=".7">
          {stubs.map(([x, a, b], i) => <path key={i} d={`M${x} ${a}V${b}`} />)}
          <path d="M766.500 503v5M766.500 519v5M870 468v7M834 427v10" />
        </g>
        <g fill="#66676a">{ends.map(([x, y], i) => <circle key={i} cx={x} cy={y} r="1.800" />)}</g>
        <g fill="#d4d4d6">
          <circle cx="320" cy="454.500" r=".9" /><circle cx="532.500" cy="816.500" r=".9" />
          <path d="M813.500 424.500l1.300 1.300-1.300 1.300-1.300-1.300zM827.500 424.500l1.300 1.300-1.300 1.300-1.300-1.300zM834 424.500l1.300 1.300-1.300 1.300-1.300-1.300z" opacity=".7" />
        </g>
        <g stroke="#c4c5c7" strokeWidth=".8" strokeDasharray="2.2 .5 1.400 .4" opacity=".65">
          {nodes.map(([x, y, , w], i) => <path key={i} d={`M${x - w / 2} ${y + 8.700}h${w}`} />)}
          {tools.map(([x, y, , w], i) => <path key={i} d={`M${x - w / 2} ${y + 7.300}h${w}`} />)}
        </g>
        <g stroke="#8e8f92" strokeWidth=".6" opacity=".5">
          {nodes.filter((n) => n[3] > 11).map(([x, y, , w], i) => <path key={i} d={`M${x - w / 4} ${y + 10.400}h${w / 2}`} />)}
        </g>
      </svg>

      {nodes.map(([x, y, kind], i) => (
        <div
          key={i}
          className={"absolute flex size-[14px] items-center justify-center border border-[#6c6d6f] bg-[#414244] " + (kind === "trigger" || kind === "cursor" ? "rounded-l-[6px] rounded-r-[1px]" : "rounded-[1px]")}
          style={at(x - 7, y - 7)}
        >
          <Glyph kind={kind} />
          <i className="absolute -right-[2px] top-[5px] size-[2.500px] rounded-full bg-[#dedee0]" />
          {kind !== "trigger" && kind !== "cursor" && <i className="absolute -left-[2px] top-[5px] h-[2.500px] w-[2px] bg-[#dedee0]" />}
        </div>
      ))}
      {wides.map(([x, y, kind], i) => (
        <div key={i} className="absolute flex h-[14px] w-[35px] items-center rounded-[1px] border border-[#6d6e70] bg-[#414244] pl-[3.500px]" style={at(x, y)}>
          <Glyph kind={kind} />
          <div className="ml-[2.500px] flex flex-col gap-[1px]"><i className="h-px w-[10px] bg-[#a9aaac]" /><i className="h-px w-[9px] bg-[#5c5d60]" /></div>
          <i className="absolute -right-[2px] top-[5px] size-[2.500px] rounded-full bg-[#dedee0]" />
          <i className="absolute -left-[2px] top-[5px] h-[2.500px] w-[2px] bg-[#dedee0]" />
        </div>
      ))}
      {tools.map(([x, y, kind], i) => (
        <div key={i} className={"absolute flex size-[11px] items-center justify-center rounded-full border bg-[#29293a] " + (kind === "sheetring" ? "border-[#2b8a55]" : "border-[#55566a]")} style={at(x - 5.5, y - 5.5)}>
          <Glyph kind={kind} />
          <i className="absolute left-[3.500px] -top-[2.500px] size-[2px] rotate-45 bg-[#a9a9b5]" />
        </div>
      ))}
      <div className="absolute flex h-[10px] w-[32px] items-center rounded-[1px] border border-[#35344f] bg-[#272738] pl-[2px]" style={at(864, 457.5)}>
        <svg className="size-[4px]" viewBox="0 0 4 4"><circle cx="2" cy="2" r="1.500" fill="none" stroke="#a9a9b5" strokeWidth=".8" /></svg>
        <div className="ml-[3px] flex flex-col items-center gap-[1px]"><i className="h-px w-[17px] bg-[#8f8fa6]" /><i className="h-px w-[11px] bg-[#8f8fa6]" /></div>
      </div>
      {[272, 301.5, 331, 361, 393].map((x) => (
        <div key={x} className="absolute h-[6px] w-[14px] border border-[#77787a] bg-[#414244]" style={at(x, 827.5)} />
      ))}
      <div className="absolute h-[2px] w-[30px] bg-[#35344f]" style={at(583, 830)} />

      {/* floating controls */}
      <div className="absolute bottom-[7px] left-[8px] flex gap-[6px]">
        {[
          <svg key="f" className="size-[8px]" viewBox="0 0 8 8" fill="none" stroke="#fff" strokeWidth="1.300"><path d="M.7 2.600V.7h1.900M5.400.7h1.900v1.900M7.300 5.400v1.900H5.400M2.600 7.300H.7V5.400" /></svg>,
          <FaSearchPlus key="zi" className="size-[8.500px]" />,
          <FaSearchMinus key="zo" className="size-[8.500px]" />,
          <FaUndo key="u" className="size-[8px]" />,
          <svg key="b" className="size-[11px]" viewBox="0 0 11 11" fill="#fff"><path d="M.3.300L.9 0l4 3.200 2.200-1.300.9 1.900 2.800.7-1.800 1.300-1.600 4.700-1.600-1.500-1.800 1.100-.1-2L2 7.300l1.500-2.800z" /></svg>,
        ].map((ic, i) => (
          <div key={i} className="flex size-[28.300px] items-center justify-center rounded-[3px] border border-[#8d8e90] text-white">{ic}</div>
        ))}
      </div>
      <div className="absolute bottom-[7.500px] left-[506px] flex h-[20.500px] w-[80px] items-center justify-center gap-[3.500px] rounded-[2.500px] bg-[#ff6d5a] text-[7.300px] font-medium text-white">
        <FaFlask className="size-[8px]" />Test workflow
      </div>
      <div className="absolute right-[7px] top-[7.500px] flex size-[28.500px] items-center justify-center rounded-[3px] border border-[#9b9c9e]"><FaPlus className="size-[8px] text-white" /></div>
      <div className="absolute bottom-[7px] right-[7px] flex size-[28.500px] items-center justify-center rounded-[3px] border border-[#434446]">
        <svg className="size-[13px]" viewBox="0 0 13 13"><path d="M5.500 2.500l1.200 3.300L10 7l-3.300 1.200-1.200 3.300-1.200-3.300L1 7l3.300-1.200z" fill="#a875f5" stroke="#a875f5" strokeWidth=".9" /><circle cx="9" cy="1.800" r="1.200" fill="#e58bb0" /><circle cx="11.300" cy="4.300" r=".9" fill="#c98bd0" /></svg>
      </div>
    </div>
  );
}

export default function App() {
  return (
    <div className="relative flex h-[832px] w-[1280px] flex-col overflow-hidden bg-[#22262e] font-['Inter','Liberation_Sans',sans-serif] [text-rendering:geometricPrecision]">
      <Wallpaper />
      <MenuBar />
      <div className="relative flex min-h-0 flex-1 flex-col rounded-t-[9px] ml-[13px] mr-[39px] bg-[#2b2219]">
        <div className="h-[7px] shrink-0" />
        <main className="ml-[1px] flex min-h-0 flex-1 flex-col overflow-hidden rounded-[7px] border border-[#5c5249] border-b-[#6f7072]">
          <TabStrip />
          <Toolbar />
          <Bookmarks />
          <div className="flex min-h-0 flex-1">
            <Sidebar />
            <section className="flex min-w-0 flex-1 flex-col">
              <TopHeader />
              <Canvas />
            </section>
          </div>
        </main>
      </div>

      <DockIcon cls="top-[261px]">
        <svg className="size-[24px]" viewBox="0 0 24 24"><path d="M2 3.500L4.500 1.500 18.500.7l4 2.800v17.800L21 23.300 6.500 24 2 19z" fill="#fff" stroke="#222" strokeWidth=".8" /><path d="M2.500 4.500l4 3v15.500L2.500 18.500z" fill="#111" /><path d="M7 6.500l15-1v16L7 22.500z" fill="#fff" stroke="#111" strokeWidth="1.500" /><path d="M4.500 3l13.500-.8 2.500 1.600L7 4.800z" fill="#fff" /></svg>
        <span className="absolute left-[9px] top-[5px] font-['Liberation_Serif',serif] text-[15px] font-bold leading-[19px] text-black">N</span>
      </DockIcon>
      <DockIcon cls="top-[399px] rounded-[5px] bg-[#07161d]">
        <svg className="size-[20px]" viewBox="0 0 20 20" fill="none" stroke="#ff4f3f" strokeWidth="2.300" strokeLinecap="round" strokeLinejoin="round"><path d="M3.500 8.500C5 4 9 2.500 13 2.700c5 .3 4.500 6-1 6.800-2 .3-3 .1-3.500 0 2 0 3 1.300 3.500 3.500.4 2.300 2 3.300 5 2.300" /><path d="M11 4.500C9.500 9 7.500 14 4 16.500" /></svg>
      </DockIcon>
      <DockIcon cls="top-[539px] rounded-[5px] bg-[#e4e7ec]"><SiOpenai className="size-[18px] text-[#2b2d32]" /></DockIcon>
      <DockIcon cls="top-[680px] rounded-[5px] bg-linear-to-b from-[#4fdc60] to-[#1fb83a]"><FaWhatsapp className="size-[20px] text-white" /></DockIcon>
    </div>
  );
}
